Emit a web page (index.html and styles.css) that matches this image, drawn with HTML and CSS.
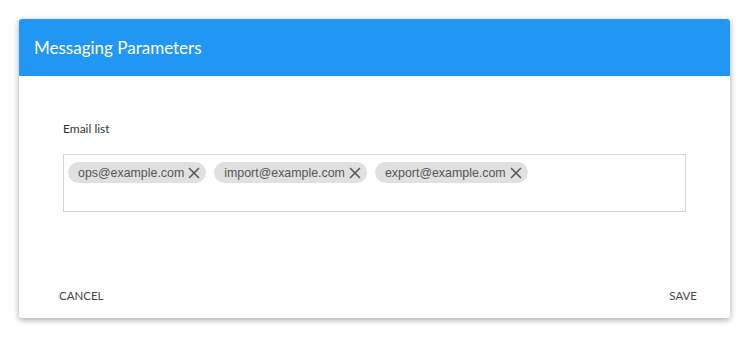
FILE: index.html
```html
<!DOCTYPE html>
<html lang="en">
<head>
  <meta charset="UTF-8">
  <title>Messaging Parameters</title>
  <link rel="stylesheet" href="styles.css">
</head>
<body>
  <div class="dialog">
    <div class="dialog-header">
      <h2>Messaging Parameters</h2>
    </div>

    <div class="dialog-body">
      <label class="field-label">Email list</label>
      <div class="chip-input">
        <span class="chip">ops@example.com
          <svg class="chip-remove" viewBox="0 0 12 12"><path d="M1 1 L11 11 M11 1 L1 11"/></svg>
        </span>
        <span class="chip">import@example.com
          <svg class="chip-remove" viewBox="0 0 12 12"><path d="M1 1 L11 11 M11 1 L1 11"/></svg>
        </span>
        <span class="chip">export@example.com
          <svg class="chip-remove" viewBox="0 0 12 12"><path d="M1 1 L11 11 M11 1 L1 11"/></svg>
        </span>
      </div>
    </div>

    <div class="dialog-actions">
      <button class="btn">CANCEL</button>
      <button class="btn">SAVE</button>
    </div>
  </div>
</body>
</html>
```

FILE: styles.css
```css
body {
  margin: 0;
  padding: 19px 0 20px 19px;
  background: #fff;
  font-family: Lato, "Open Sans", sans-serif;
  color: #333;
}
.dialog {
  width: 711px;
  height: 299px;
  background: #fff;
  border-radius: 3px;
  box-shadow: 0 2px 6px rgba(0,0,0,0.35);
  display: flex;
  flex-direction: column;
  overflow: hidden;
}
.dialog-header {
  background: #2196f3;
  height: 57px;
  padding: 0 15px;
  display: flex;
  align-items: center;
  flex-shrink: 0;
}
.dialog-header h2 {
  margin: 0;
  font-size: 17px;
  font-weight: normal;
  color: #fff;
}
.dialog-body {
  padding: 45px 44px 0;
  flex: 1;
}
.field-label {
  display: block;
  font-size: 12px;
  color: #333;
  margin-bottom: 18px;
}
.chip-input {
  height: 58px;
  box-sizing: border-box;
  border: 1px solid #d4d4d4;
  padding: 7px 4px;
  display: flex;
  align-items: flex-start;
  gap: 8px;
}
.chip {
  display: inline-flex;
  align-items: center;
  height: 21px;
  padding: 0 6px 0 10px;
  border-radius: 11px;
  background: #e0e0e0;
  font-family: "Liberation Sans", Arial, sans-serif;
  font-size: 12.4px;
  color: #555;
}
.chip-remove {
  width: 12px;
  height: 12px;
  margin-left: 4px;
  stroke: #555;
  stroke-width: 1.5;
  fill: none;
}
.dialog-actions {
  display: flex;
  justify-content: space-between;
  padding: 0 17px 8px 24px;
}
.btn {
  background: none;
  border: none;
  padding: 8px 16px;
  font-family: Lato, "Open Sans", sans-serif;
  font-size: 11.5px;
  color: #444;
  cursor: pointer;
}
```
